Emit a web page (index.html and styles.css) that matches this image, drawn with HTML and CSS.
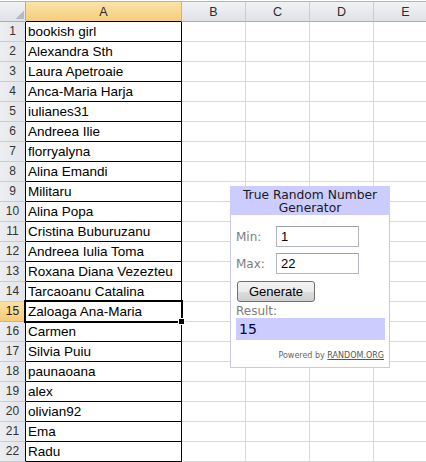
FILE: index.html
```html
<!DOCTYPE html>
<html>
<head>
<meta charset="utf-8">
<link rel="stylesheet" href="styles.css">
</head>
<body>
<div class="sheet">
  <div class="hrow">
    <div class="corner"></div>
    <div class="ch sel">A</div>
    <div class="ch">B</div>
    <div class="ch">C</div>
    <div class="ch">D</div>
    <div class="ch">E</div>
  </div>
  <div class="row"><div class="rn">1</div><div class="a">bookish girl</div><div class="c"></div><div class="c"></div><div class="c"></div><div class="c"></div></div>
  <div class="row"><div class="rn">2</div><div class="a">Alexandra Sth</div><div class="c"></div><div class="c"></div><div class="c"></div><div class="c"></div></div>
  <div class="row"><div class="rn">3</div><div class="a">Laura Apetroaie</div><div class="c"></div><div class="c"></div><div class="c"></div><div class="c"></div></div>
  <div class="row"><div class="rn">4</div><div class="a">Anca-Maria Harja</div><div class="c"></div><div class="c"></div><div class="c"></div><div class="c"></div></div>
  <div class="row"><div class="rn">5</div><div class="a">iulianes31</div><div class="c"></div><div class="c"></div><div class="c"></div><div class="c"></div></div>
  <div class="row"><div class="rn">6</div><div class="a">Andreea Ilie</div><div class="c"></div><div class="c"></div><div class="c"></div><div class="c"></div></div>
  <div class="row"><div class="rn">7</div><div class="a">florryalyna</div><div class="c"></div><div class="c"></div><div class="c"></div><div class="c"></div></div>
  <div class="row"><div class="rn">8</div><div class="a">Alina Emandi</div><div class="c"></div><div class="c"></div><div class="c"></div><div class="c"></div></div>
  <div class="row"><div class="rn">9</div><div class="a">Militaru</div><div class="c"></div><div class="c"></div><div class="c"></div><div class="c"></div></div>
  <div class="row"><div class="rn">10</div><div class="a">Alina Popa</div><div class="c"></div><div class="c"></div><div class="c"></div><div class="c"></div></div>
  <div class="row"><div class="rn">11</div><div class="a">Cristina Buburuzanu</div><div class="c"></div><div class="c"></div><div class="c"></div><div class="c"></div></div>
  <div class="row"><div class="rn">12</div><div class="a">Andreea Iulia Toma</div><div class="c"></div><div class="c"></div><div class="c"></div><div class="c"></div></div>
  <div class="row"><div class="rn">13</div><div class="a">Roxana Diana Vezezteu</div><div class="c"></div><div class="c"></div><div class="c"></div><div class="c"></div></div>
  <div class="row"><div class="rn">14</div><div class="a">Tarcaoanu Catalina</div><div class="c"></div><div class="c"></div><div class="c"></div><div class="c"></div></div>
  <div class="row"><div class="rn sel">15</div><div class="a">Zaloaga Ana-Maria</div><div class="c"></div><div class="c"></div><div class="c"></div><div class="c"></div></div>
  <div class="row"><div class="rn">16</div><div class="a">Carmen</div><div class="c"></div><div class="c"></div><div class="c"></div><div class="c"></div></div>
  <div class="row"><div class="rn">17</div><div class="a">Silvia Puiu</div><div class="c"></div><div class="c"></div><div class="c"></div><div class="c"></div></div>
  <div class="row"><div class="rn">18</div><div class="a">paunaoana</div><div class="c"></div><div class="c"></div><div class="c"></div><div class="c"></div></div>
  <div class="row"><div class="rn">19</div><div class="a">alex</div><div class="c"></div><div class="c"></div><div class="c"></div><div class="c"></div></div>
  <div class="row"><div class="rn">20</div><div class="a">olivian92</div><div class="c"></div><div class="c"></div><div class="c"></div><div class="c"></div></div>
  <div class="row"><div class="rn">21</div><div class="a">Ema</div><div class="c"></div><div class="c"></div><div class="c"></div><div class="c"></div></div>
  <div class="row"><div class="rn">22</div><div class="a">Radu</div><div class="c"></div><div class="c"></div><div class="c"></div><div class="c"></div></div>

  <div class="active-cell"></div>
  <div class="fill-handle"></div>

  <div class="trng">
    <div class="trng-title">True Random Number<br>Generator</div>
    <div class="trng-body">
      <div class="field first"><span class="lbl">Min:</span><input class="num" type="text" value="1"></div>
      <div class="field"><span class="lbl">Max:</span><input class="num" type="text" value="22"></div>
      <button class="gen" type="button">Generate</button>
      <div class="res-lbl">Result:</div>
      <div class="res">15</div>
      <div class="powered">Powered by <span class="link">RANDOM.ORG</span></div>
    </div>
  </div>
</div>
</body>
</html>
```
FILE: styles.css
```css
html, body {
  margin: 0;
  padding: 0;
  background: #ffffff;
  overflow: hidden;
}

.sheet {
  position: relative;
  padding-top: 1px;
  width: 426px;
  height: 462px;
  box-sizing: border-box;
  overflow: hidden;
  font-family: "Liberation Sans", Arial, sans-serif;
}

.hrow, .row {
  display: grid;
  grid-template-columns: 26px 156px 64px 64px 64px 64px;
  width: 438px;
}

.hrow { height: 21px; }
.row { height: 20px; }

.hrow > div {
  box-sizing: border-box;
  border-top: 1px solid #b2b6bc;
  border-bottom: 1px solid #a9aeb5;
  border-right: 1px solid #c9cdd2;
  background: linear-gradient(to bottom, #f1f2f4, #dfe2e7);
  font-size: 12.5px;
  line-height: 18px;
  padding-top: 1px;
  text-align: center;
  color: #2c2c2c;
}

.hrow > .corner {
  background:
    linear-gradient(135deg, transparent 50%, #b7bbc1 50%) no-repeat right 1px bottom 2px / 9px 9px,
    linear-gradient(to bottom, #f1f2f4, #dfe2e7);
  border-right: 1px solid #a9aeb5;
}

.hrow > .ch.sel {
  background: linear-gradient(to bottom, #fbe3a8, #f6cd7c);
  border-right: 1px solid #e8b04c;
  border-bottom: 1px solid #000000;
}

.row > div {
  box-sizing: border-box;
  white-space: nowrap;
  overflow: hidden;
}

.rn {
  background: linear-gradient(to right, #eceef1, #e1e4e9);
  border-right: 1px solid #000000;
  border-bottom: 1px solid #c9cdd2;
  font-size: 12px;
  line-height: 19px;
  text-align: center;
  color: #333333;
}

.rn.sel {
  background: linear-gradient(to bottom, #fbe0a2, #f6cb78);
  border-bottom: 1px solid #e8b04c;
  color: #222222;
}

.a {
  border-right: 1px solid #000000;
  border-bottom: 1px solid #000000;
  font-size: 13.5px;
  line-height: 18px;
  padding: 1px 0 0 2px;
  color: #000000;
}

.c {
  border-right: 1px solid #d9d9d9;
  border-bottom: 1px solid #d9d9d9;
}

/* selection overlay */
.active-cell {
  position: absolute;
  left: 24px;
  top: 300px;
  width: 159px;
  height: 23px;
  box-sizing: border-box;
  border: 2px solid #000000;
  box-shadow: inset 0 0 0 1px #ffffff;
  pointer-events: none;
}

.fill-handle {
  position: absolute;
  left: 178px;
  top: 318px;
  width: 5px;
  height: 5px;
  background: #000000;
  border: 1px solid #ffffff;
}

/* random number widget */
.trng {
  position: absolute;
  left: 230px;
  top: 186px;
  width: 160px;
  height: 182px;
  box-sizing: border-box;
  border: 1px solid #c8c8e4;
  background: #ffffff;
  font-family: "DejaVu Sans", Verdana, sans-serif;
}

.trng-title {
  height: 29px;
  box-sizing: border-box;
  margin: -1px -1px 0 -1px;
  padding-top: 3px;
  background: #ccccff;
  text-align: center;
  font-size: 12.3px;
  line-height: 13px;
  color: #1a1a1a;
}

.trng-body {
  display: flex;
  flex-direction: column;
  padding: 0 4px 0 5px;
}

.field {
  display: flex;
  align-items: center;
  margin-top: 6px;
  height: 21px;
}

.field.first { margin-top: 11px; }

.lbl {
  width: 40px;
  font-size: 12px;
  color: #7d7d7d;
}

.num {
  box-sizing: border-box;
  width: 83px;
  height: 21px;
  margin: 0;
  padding: 0 4px;
  border: 1px solid #b4b7bd;
  border-top-color: #a0a4aa;
  font-family: "Liberation Sans", Arial, sans-serif;
  font-size: 13px;
  color: #000000;
  background: #ffffff;
  outline: none;
}

.gen {
  align-self: flex-start;
  box-sizing: border-box;
  width: 78px;
  height: 21px;
  margin: 7px 0 0 1px;
  padding: 0;
  border: 1px solid #707070;
  border-radius: 3px;
  background: linear-gradient(to bottom, #f3f3f3 0%, #ebebeb 50%, #dddddd 51%, #cfcfcf 100%);
  font-family: "Liberation Sans", Arial, sans-serif;
  font-size: 13px;
  color: #000000;
}

.res-lbl {
  margin-top: 2px;
  font-size: 12px;
  line-height: 14px;
  color: #7d7d7d;
}

.res {
  height: 22px;
  background: #ccccff;
  font-size: 14px;
  line-height: 22px;
  padding-left: 3px;
  color: #00003a;
}

.powered {
  margin-top: 11px;
  text-align: right;
  font-size: 8px;
  line-height: 10px;
  color: #666666;
  padding-right: 1px;
}

.powered .link {
  color: #555555;
  text-decoration: underline;
}
```
